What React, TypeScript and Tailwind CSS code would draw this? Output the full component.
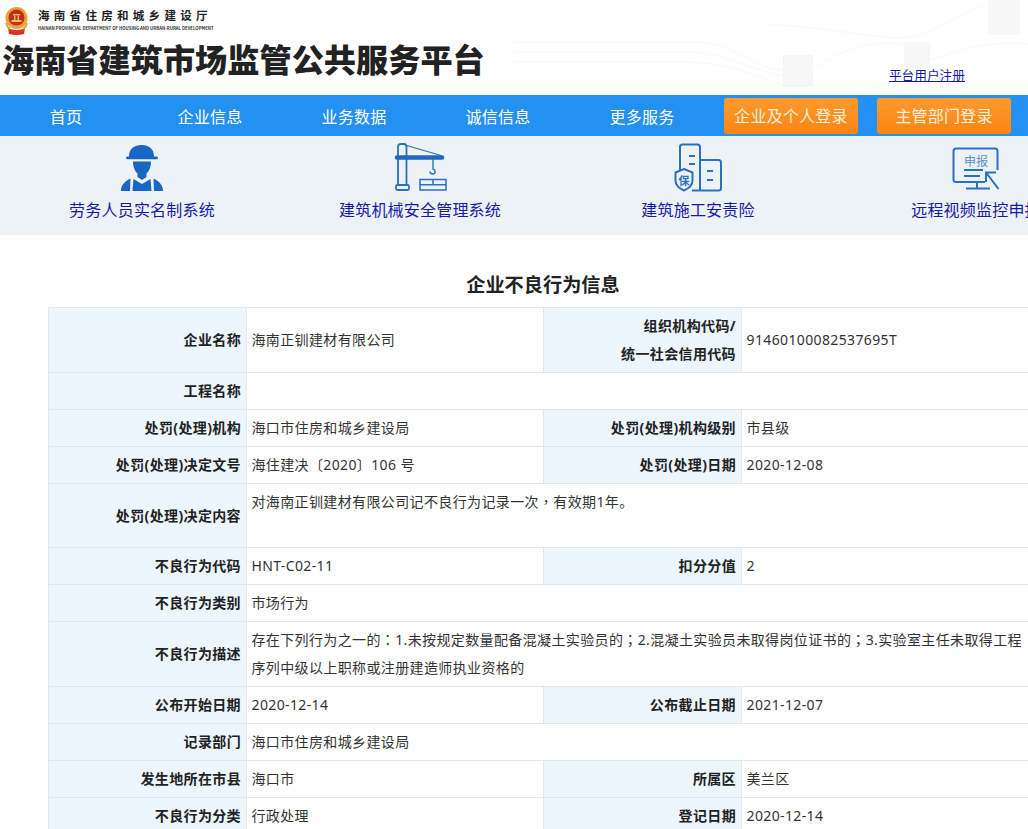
import type { ReactNode } from "react";

const NAV = ["首页", "企业信息", "业务数据", "诚信信息", "更多服务"];

// the reference centres full-width punctuation, the TC cut of the font does too
const P = ({ c }: { c: string }) => <span className="font-['Noto_Sans_CJK_TC'] leading-none">{c}</span>;

type Row = { h: string; cells: { label: string; value?: ReactNode; span?: boolean; top?: boolean }[] };

const ROWS: Row[] = [
  {
    h: "h-[65px]",
    cells: [
      { label: "企业名称", value: "海南正钏建材有限公司" },
      { label: "组织机构代码/\n统一社会信用代码", value: "91460100082537695T" },
    ],
  },
  { h: "h-[37px]", cells: [{ label: "工程名称", value: "", span: true }] },
  {
    h: "h-[37px]",
    cells: [
      { label: "处罚(处理)机构", value: "海口市住房和城乡建设局" },
      { label: "处罚(处理)机构级别", value: "市县级" },
    ],
  },
  {
    h: "h-[37px]",
    cells: [
      { label: "处罚(处理)决定文号", value: "海住建决〔2020〕106 号" },
      { label: "处罚(处理)日期", value: "2020-12-08" },
    ],
  },
  {
    h: "h-[64px]",
    cells: [
      {
        label: "处罚(处理)决定内容",
        value: (
          <>
            对海南正钏建材有限公司记不良行为记录一次
            <P c="，" />
            有效期1年。
          </>
        ),
        span: true,
        top: true,
      },
    ],
  },
  {
    h: "h-[37px]",
    cells: [
      { label: "不良行为代码", value: "HNT-C02-11" },
      { label: "扣分分值", value: "2" },
    ],
  },
  { h: "h-[37px]", cells: [{ label: "不良行为类别", value: "市场行为", span: true }] },
  {
    h: "h-[65px]",
    cells: [
      {
        label: "不良行为描述",
        value: (
          <>
            存在下列行为之一的
            <P c="：" />
            1.未按规定数量配备混凝土实验员的
            <P c="；" />
            2.混凝土实验员未取得岗位证书的
            <P c="；" />
            3.实验室主任未取得工程序列中级以上职称或注册建造师执业资格的
          </>
        ),
        span: true,
      },
    ],
  },
  {
    h: "h-[37px]",
    cells: [
      { label: "公布开始日期", value: "2020-12-14" },
      { label: "公布截止日期", value: "2021-12-07" },
    ],
  },
  { h: "h-[37px]", cells: [{ label: "记录部门", value: "海口市住房和城乡建设局", span: true }] },
  {
    h: "h-[37px]",
    cells: [
      { label: "发生地所在市县", value: "海口市" },
      { label: "所属区", value: "美兰区" },
    ],
  },
  {
    h: "h-[37px]",
    cells: [
      { label: "不良行为分类", value: "行政处理" },
      { label: "登记日期", value: "2020-12-14" },
    ],
  },
];

function Emblem() {
  return (
    <svg width="30" height="34" viewBox="0 0 30 34" className="shrink-0">
      <circle cx="15.5" cy="15" r="11" fill="#e8a33a" />
      <circle cx="15.5" cy="14.5" r="8" fill="#c8281e" />
      <path d="M12 11h7v1.5h-7zM10.5 17h10v2h-10zM13 13h1.5v4H13zM16.5 13H18v4h-1.5z" fill="#f0c14e" />
      <path d="M7 25c5 2.5 12 2.5 17 0l-1 6c-5 1.5-10 1.5-15 0z" fill="#d8352a" />
      <path d="M5 20c1 3 2 5 4 6M26 20c-1 3-2 5-4 6" stroke="#e8a33a" strokeWidth="2" fill="none" />
    </svg>
  );
}

function HeaderArt() {
  return (
    <svg className="absolute inset-0" width="1028" height="95" viewBox="0 0 1028 95" fill="none">
      <g stroke="#fafafa" strokeWidth="1.5">
        <path d="M514 42h180c40 0 60 28 89 28" />
        <path d="M514 52h170c40 0 60 16 99 24" />
        <path d="M514 62h170c40 0 70 12 100 24" />
        <path d="M770 25c60 0 120 20 150 10s50-30 70-30" />
        <path d="M813 70c30-24 60-30 90-26" />
        <path d="M930 60c30-10 60-20 98-16" />
        <path d="M860 95c20-10 50-20 70-22" />
      </g>
      <rect x="783" y="55" width="30" height="32" fill="#f6f6f6" />
      <rect x="904" y="42" width="26" height="26" fill="#f7f7f7" />
      <rect x="988" y="0" width="32" height="35" fill="#f7f7f7" />
    </svg>
  );
}

function WorkerIcon() {
  return (
    <svg width="70" height="55" viewBox="-3 0 70 55" fill="#1a66c4">
      <path d="M19 16.5C19 9 24 5 31.5 5S44 9 44 16.5h3c1.2 0 1.2 2.8 0 2.8H17c-1.2 0-1.2-2.8 0-2.800z" />
      <path d="M23 21.5h18c0 6-2 9.500-4.500 12v3.500L32 40l-4.500-3v-3.500C25 31 23 27.500 23 21.500z" />
      <path d="M23.500 39l8.500 5 8.500-5 1 12H22.500z" />
      <path d="M20.500 38.500L20 51H11c0-6 4-10 9.500-12.500zM43.500 38.500L44 51h9c0-6-4-10-9.500-12.500z" />
    </svg>
  );
}

function CraneIcon() {
  return (
    <svg width="70" height="55" viewBox="0 0 70 55" fill="none" stroke="#2b70c4" strokeWidth="1.8">
      <path d="M13 45V7c0-2 1-3 3-3h3c1.500 0 2.500 1 2.500 3v38" />
      <path d="M20 5l36 10.500" strokeWidth="1.200" />
      <path d="M12 17.500h45" strokeWidth="4.500" strokeLinecap="round" stroke="#1f68c4" />
      <rect x="11" y="45" width="13" height="5" rx="1.500" />
      <path d="M48 19v10c3 1 2.500 5 0 5s-3-1.500-3-2.500" strokeWidth="1.400" />
      <path d="M35 39.500h26v10.500H35zM35 44.700h26M48 39.500v5.200" strokeWidth="1.500" />
    </svg>
  );
}

function InsuranceIcon() {
  return (
    <svg width="70" height="55" viewBox="-2 0 70 55" fill="none" stroke="#2b70c4" strokeWidth="2">
      <path d="M15 30V7c0-1.500 1-2.500 2.500-2.500h15C34 4.500 35 5.500 35 7v43" />
      <path d="M35 20h18.500c1.500 0 2.500 1 2.500 2.500V48c0 1.500-1 2.500-2.500 2.500H27" />
      <path d="M24 16h6M24 24h6M42 31h6M42 40h6" />
      <path d="M19 29l8.500 3.500v8c0 5-4 8-8.500 10-4.500-2-8.500-5-8.500-10v-8z" fill="#edf2f6" />
      <text x="19" y="44.500" textAnchor="middle" fontSize="11" fontWeight="700" fill="#2b70c4" stroke="none" fontFamily="'Noto Sans CJK SC', sans-serif">保</text>
    </svg>
  );
}

function ReportIcon() {
  return (
    <svg width="70" height="55" viewBox="-4 0 70 55" fill="none" stroke="#2b70c4" strokeWidth="2">
      <path d="M40 42H11c-1.500 0-2.500-1-2.500-2.500V11c0-1.500 1-2.500 2.500-2.500h39c1.500 0 2.500 1 2.500 2.500v19" />
      <text x="31" y="26" textAnchor="middle" fontSize="12" fill="#5f8fc9" stroke="none" fontFamily="'Noto Sans CJK SC', sans-serif">申报</text>
      <path d="M19 30h19M19 36h16" />
      <path d="M53.500 49L41.500 33M41 42V32.500h10" />
      <path d="M32 42v6M21 48.500h24" />
    </svg>
  );
}

const SYSTEMS = [
  { name: "劳务人员实名制系统", icon: <WorkerIcon /> },
  { name: "建筑机械安全管理系统", icon: <CraneIcon /> },
  { name: "建筑施工安责险", icon: <InsuranceIcon /> },
  { name: "远程视频监控申报", icon: <ReportIcon /> },
];

export default function App() {
  return (
    <div className="w-[1028px] h-[829px] overflow-hidden bg-white font-['Noto_Sans_CJK_SC','Noto_Sans',sans-serif] text-[#333]">
      <header className="relative h-[95px] overflow-hidden bg-white">
        <HeaderArt />
        <div className="relative flex items-start pl-[1px] pt-[3px]">
          <Emblem />
          <div className="ml-[7px] mt-[2px]">
            <div className="text-[11.500px] leading-[20px] font-bold tracking-[4.300px] text-[#222] whitespace-nowrap">海南省住房和城乡建设厅</div>
            <div className="text-[4.300px] leading-[6px] font-bold text-[#333] whitespace-nowrap">HAINAN PROVINCIAL DEPARTMENT OF HOUSING AND URBAN-RURAL DEVELOPMENT</div>
          </div>
        </div>
        <div className="relative flex items-start justify-between mt-[1px] pl-[2px] pr-[63px]">
          <h1 className="text-[32.200px] leading-[40px] font-black text-[#222] whitespace-nowrap">海南省建筑市场监管公共服务平台</h1>
          <a href="#" className="mt-[28px] text-[12.700px] leading-[18px] text-[#1a1aa8] underline">平台用户注册</a>
        </div>
      </header>

      <nav className="h-[41px] bg-[#2490f0] flex items-start">
        <div className="flex ml-[-6px]">
          {NAV.map((item) => (
            <a key={item} href="#" className="w-[144px] text-center text-[16px] tracking-[0.200px] leading-[42px] text-white">
              {item}
            </a>
          ))}
        </div>
        <div className="flex gap-[19px] ml-[10px] mt-[3px]">
          <a href="#" className="w-[134px] h-[36px] rounded-[3px] bg-gradient-to-b from-[#ff9a2e] to-[#fb8510] text-center text-[16px] tracking-[0.200px] leading-[35px] text-[#fdf0dc]">企业及个人登录</a>
          <a href="#" className="w-[134px] h-[36px] rounded-[3px] bg-gradient-to-b from-[#ff9a2e] to-[#fb8510] text-center text-[16px] tracking-[0.200px] leading-[35px] text-[#fdf0dc]">主管部门登录</a>
        </div>
      </nav>

      <div className="h-[99px] bg-[#edf2f6] flex pl-[3px] overflow-hidden">
        {SYSTEMS.map((s) => (
          <a key={s.name} href="#" className="w-[278px] shrink-0 flex flex-col items-center pt-[4px]">
            {s.icon}
            <span className="text-[16px] tracking-[0.200px] leading-[24px] text-[#1a1aa8] whitespace-nowrap mt-[2px]">{s.name}</span>
          </a>
        ))}
      </div>

      <h2 className="w-[990px] ml-[48px] h-[72px] pt-[34px] text-center text-[19.200px] leading-[30px] font-bold text-[#222]">企业不良行为信息</h2>

      <table className="ml-[48px] w-[990px] table-fixed border-collapse font-['Noto_Sans','Noto_Sans_CJK_SC',sans-serif] text-[14px] leading-[28px] tracking-[0.370px]">
        <colgroup>
          <col className="w-[198px]" />
          <col className="w-[297px]" />
          <col className="w-[198px]" />
          <col className="w-[297px]" />
        </colgroup>
        <tbody>
          {ROWS.map((row) => (
            <tr key={row.cells[0].label} className={row.h}>
              {row.cells.map((c) => (
                <Cell key={c.label} label={c.label} value={c.value} span={c.span} top={c.top} />
              ))}
            </tr>
          ))}
        </tbody>
      </table>
    </div>
  );
}

function Cell({ label, value, span, top }: { label: string; value?: ReactNode; span?: boolean; top?: boolean }) {
  return (
    <>
      <th className="border border-[#e6e6e6] bg-[#edf5fd] pl-[5px] pr-[5px] py-[4px] text-right font-bold text-[#222] whitespace-pre-line">{label}</th>
      <td colSpan={span ? 3 : 1} className={`border border-[#e6e6e6] pl-[4.500px] pr-[5px] py-[4px] text-[#333] ${top ? "align-top" : "align-middle"}`}>
        {value}
      </td>
    </>
  );
}
